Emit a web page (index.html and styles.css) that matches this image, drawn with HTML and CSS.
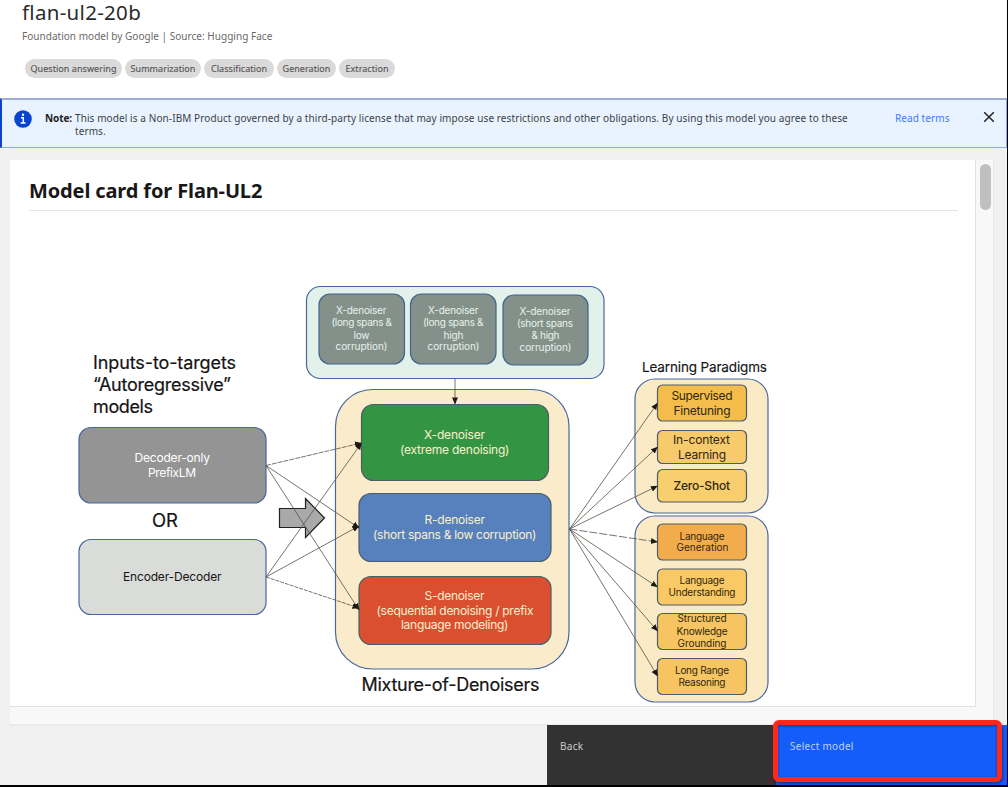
FILE: index.html
```html
<!DOCTYPE html>
<html lang="en">
<head>
<meta charset="utf-8">
<title>flan-ul2-20b</title>
<link rel="stylesheet" href="styles.css">
</head>
<body>
<div class="dialog">
  <header class="head">
    <h1 class="title">flan-ul2-20b</h1>
    <p class="subtitle">Foundation model by Google | Source: Hugging Face</p>
    <div class="tags">
      <span class="tag t1">Question answering</span>
      <span class="tag t2">Summarization</span>
      <span class="tag t3">Classification</span>
      <span class="tag t4">Generation</span>
      <span class="tag t5">Extraction</span>
    </div>
  </header>
  <section class="notice">
    <svg class="info" viewBox="0 0 18 18" width="18" height="18"><circle cx="9" cy="9" r="8.8" fill="#0a43ce"/><circle cx="9" cy="4.8" r="1.2" fill="#fff"/><path d="M7 7.7h2.3v5M6.600 13h5" fill="none" stroke="#fff" stroke-width="1.5"/></svg>
    <strong class="note-label">Note:</strong>
    <p class="note-text">This model is a Non-IBM Product governed by a third-party license that may impose use restrictions and other obligations. By using this model you agree to these<br>terms.</p>
    <a class="read">Read terms</a>
    <svg class="close" viewBox="0 0 12 12" width="12" height="12"><path d="M1.200 1.200l9.600 9.600M10.800 1.200l-9.600 9.600" stroke="#222" stroke-width="1.5"/></svg>
  </section>
  <main class="panel">
    <article class="card">
      <h2 class="card-title">Model card for Flan-UL2</h2>
      <svg class="diagram" viewBox="10 211 965 495" width="965" height="495">
        <defs>
          <marker id="arrow" viewBox="0 0 8 8" refX="7.5" refY="4" markerWidth="7" markerHeight="7" markerUnits="userSpaceOnUse" orient="auto"><path d="M0 .6L8 4L0 7.4z" fill="#1c1a10"/></marker>
        </defs>
        <g stroke="#48679f" stroke-width="1.2">
          <rect x="306.500" y="286.500" width="297.500" height="92" rx="14" fill="#e2f1ea"/>
          <g fill="#83918a" stroke="#41658b">
            <rect x="319" y="294" width="85.500" height="70" rx="11"/>
            <rect x="410.500" y="294" width="85.500" height="70" rx="11"/>
            <rect x="503" y="295" width="85" height="70" rx="11"/>
          </g>
          <rect x="335.500" y="389.500" width="233.500" height="279.500" rx="37" fill="#faeccb"/>
          <rect x="79" y="427.500" width="187" height="75.500" rx="12" fill="#949494"/>
          <rect x="79" y="539.500" width="187" height="75" rx="12" fill="#dadcd9"/>
          <rect x="635" y="379" width="133" height="134" rx="20" fill="#faebc6"/>
          <rect x="635" y="516" width="133" height="186" rx="20" fill="#faebc6"/>
        </g>
        <g stroke="#4c5d68" stroke-width="1.2">
          <rect x="361.500" y="404.500" width="187" height="76" rx="12" fill="#339544"/>
          <rect x="359" y="493.500" width="192" height="68" rx="12" fill="#5681bc"/>
          <rect x="359" y="576.500" width="192" height="68" rx="12" fill="#da4f30"/>
          <rect x="657.500" y="385" width="89" height="36" rx="5" fill="#f4bd4b"/>
          <rect x="657.500" y="430.500" width="89" height="33" rx="5" fill="#f7ca6c"/>
          <rect x="657.500" y="469.500" width="89" height="32.500" rx="5" fill="#f8ce6e"/>
          <rect x="657.500" y="524" width="89" height="36" rx="5" fill="#f3ac4c"/>
          <rect x="657.500" y="569" width="89" height="36" rx="5" fill="#f8c964"/>
          <rect x="657.500" y="613.500" width="89" height="36" rx="5" fill="#f6c460"/>
          <rect x="657.500" y="658.500" width="89" height="36" rx="5" fill="#f6c460"/>
        </g>
        <path d="M279.500 508.500H305.500V498.500L324.500 518L305.500 537.500V527.500H279.500z" fill="#a9a9a9" stroke="#222" stroke-width="1.2"/>
        <g stroke="#555044" stroke-width=".8" fill="none">
          <path d="M455 379V404" marker-end="url(#arrow)"/>
          <path d="M266 465.500L361.500 443" stroke-dasharray="5 1" marker-end="url(#arrow)"/>
          <path d="M266 465.500L359 528" marker-end="url(#arrow)"/>
          <path d="M266 465.500L359 610" marker-end="url(#arrow)"/>
          <path d="M266 577L361.500 443" marker-end="url(#arrow)"/>
          <path d="M266 577L359 526" marker-end="url(#arrow)"/>
          <path d="M266 577L359 608" stroke-dasharray="4 1" marker-end="url(#arrow)"/>
          <path d="M569.500 529L657.500 403" marker-end="url(#arrow)"/>
          <path d="M569.500 529L657.500 447" marker-end="url(#arrow)"/>
          <path d="M569.500 529L657.500 486" marker-end="url(#arrow)"/>
          <path d="M569.500 529L657.500 542" stroke-dasharray="8 2" marker-end="url(#arrow)"/>
          <path d="M569.500 529L657.500 587" marker-end="url(#arrow)"/>
          <path d="M569.500 529L657.500 631" marker-end="url(#arrow)"/>
          <path d="M569.500 529L657.500 676" marker-end="url(#arrow)"/>
        </g>
        <g class="label large">
          <text x="93" y="369" textLength="143">Inputs-to-targets</text>
          <text x="93" y="390.500" textLength="138">“Autoregressive”</text>
          <text x="93" y="412.500" textLength="60">models</text>
          <text x="152" y="527" textLength="26" lengthAdjust="spacingAndGlyphs">OR</text>
          <text x="361.500" y="690.500" textLength="178">Mixture-of-Denoisers</text>
        </g>
        <text class="label paradigm" x="642" y="372" textLength="125">Learning Paradigms</text>
        <g class="label mid">
          <text class="white" x="134.500" y="462" textLength="75.500">Decoder-only</text>
          <text class="white" x="148" y="477" textLength="48">PrefixLM</text>
          <text x="123" y="581" textLength="98.500">Encoder-Decoder</text>
        </g>
        <g class="label mid cream">
          <text x="424" y="439" textLength="61">X-denoiser</text>
          <text x="400" y="454" textLength="109.500">(extreme denoising)</text>
          <text x="424.500" y="524" textLength="60.500">R-denoiser</text>
          <text x="373" y="539" textLength="163.500">(short spans &amp; low corruption)</text>
          <text x="424.500" y="600" textLength="60">S-denoiser</text>
          <text x="376.500" y="615" textLength="157">(sequential denoising / prefix</text>
          <text x="401" y="629" textLength="107.500">language modeling)</text>
        </g>
        <g class="label small pale">
          <text x="336" y="314" textLength="50.500">X-denoiser</text>
          <text x="331.500" y="326" textLength="60.500">(long spans &amp;</text>
          <text x="353.500" y="338.500" textLength="16">low</text>
          <text x="335.500" y="350" textLength="52">corruption)</text>
          <text x="428" y="314" textLength="50.500">X-denoiser</text>
          <text x="423" y="326" textLength="60.500">(long spans &amp;</text>
          <text x="443.500" y="338.500" textLength="20">high</text>
          <text x="427.500" y="350" textLength="52">corruption)</text>
          <text x="519.500" y="315" textLength="51">X-denoiser</text>
          <text x="517" y="327" textLength="56">(short spans</text>
          <text x="531.500" y="339" textLength="28">&amp; high</text>
          <text x="519.500" y="351" textLength="52">corruption)</text>
        </g>
        <g class="label mid brown">
          <text x="671.500" y="400" textLength="61">Supervised</text>
          <text x="673.500" y="415" textLength="57">Finetuning</text>
          <text x="673" y="444" textLength="57">In-context</text>
          <text x="678" y="458.500" textLength="48">Learning</text>
          <text x="673.500" y="490" textLength="56.500" class="strong">Zero-Shot</text>
        </g>
        <g class="label small brown">
          <text x="679.500" y="539.500" textLength="45">Language</text>
          <text x="676.500" y="551" textLength="52">Generation</text>
          <text x="679.500" y="584" textLength="45">Language</text>
          <text x="668.500" y="596" textLength="67">Understanding</text>
          <text x="677.500" y="622" textLength="49">Structured</text>
          <text x="676.500" y="635" textLength="51">Knowledge</text>
          <text x="677.500" y="646.500" textLength="49">Grounding</text>
          <text x="675" y="674" textLength="54">Long Range</text>
          <text x="678.500" y="685.500" textLength="47">Reasoning</text>
        </g>
      </svg>
    </article>
    <div class="track"><div class="thumb"></div></div>
  </main>
  <footer class="actions">
    <button class="btn back">Back</button>
    <button class="btn select">Select model<span class="highlight"></span></button>
  </footer>
</div>
</body>
</html>
```
FILE: styles.css
```css
* { box-sizing: border-box; }
body { margin: 0; background: #000; font-family: "Noto Sans", sans-serif; overflow: hidden; }
h1, h2, p { margin: 0; }
.dialog { width: 1007px; height: 785px; background: #f1f1f1; display: flex; flex-direction: column; }
.head { height: 98px; background: #fff; padding-left: 22px; flex: none; }
.title { font-size: 20.500px; line-height: 24px; font-weight: 400; color: #2b2b2b; letter-spacing: .3px; white-space: nowrap; }
.subtitle { margin-top: 4px; font-size: 10px; line-height: 16px; color: #6a6a6a; letter-spacing: .03px; white-space: nowrap; }
.tags { display: flex; gap: 3px; margin: 15px 0 0 3px; }
.tag { height: 19px; border-radius: 10px; background: #dadada; color: #575757; font-size: 9px; line-height: 19px; text-align: center; white-space: nowrap; letter-spacing: .05px; -webkit-text-stroke: .15px #575757; }
.t1 { width: 97px; }
.t2 { width: 76px; }
.t3 { width: 70px; }
.t4 { width: 59px; }
.t5 { width: 56px; }
.notice { height: 50px; flex: none; display: flex; align-items: flex-start; background: #e9f3ff; border: 1px solid #8fabe3; border-left: 2px solid #0a43ce; border-top: 2px solid #9eafd6; padding-left: 12px; font-size: 10px; line-height: 13px; color: #3c3f45; white-space: nowrap; }
.info { margin-top: 10px; margin-right: 13px; flex: none; }
.note-label { width: 30px; margin-top: 12px; color: #222; letter-spacing: -.1px; }
.note-text { width: 820px; margin-top: 12px; letter-spacing: .093px; }
.read { color: #3c7bf5; margin-top: 12px; width: 88px; letter-spacing: .08px; }
.close { margin-top: 11px; flex: none; }
.panel { width: 984px; height: 566px; margin: 12px 0 0 10px; background: #f8f8f8; border-right: 1px solid #e9e9e9; border-bottom: 2px solid #ebebeb; display: flex; flex: none; }
.card { width: 966px; height: 547px; background: #fff; border-right: 1px solid #e2e2e2; border-bottom: 1px solid #e2e2e2; overflow: hidden; }
.card-title { margin: 0 17px 0 19px; height: 51px; border-bottom: 1px solid #e4e4e4; font-size: 20px; line-height: 28px; padding-top: 17px; color: #181818; letter-spacing: -.13px; white-space: nowrap; }
.diagram { display: block; }
.label { font-family: Inter, sans-serif; fill: #151515; }
.large { font-size: 18px; stroke: #151515; stroke-width: .2px; }
.paradigm { font-size: 13.500px; stroke: #151515; stroke-width: .15px; }
.mid { font-size: 12px; }
.small { font-size: 10px; }
.white { fill: #fff; }
.cream { fill: #fbf0cc; }
.pale { fill: #e8f1ec; }
.brown { fill: #302711; }
.strong { font-weight: 500; }
.track { padding: 4px 0 0 4px; }
.thumb { width: 11px; height: 46px; border-radius: 6px; background: #c0c0c0; }
.actions { flex: 1; display: flex; justify-content: flex-end; margin-top: -1px; }
.btn { border: 0; padding: 14px 13px; display: flex; align-items: flex-start; font: 10px/14px "Noto Sans", sans-serif; letter-spacing: .3px; color: #ccc; }
.back { width: 229px; background: #323232; }
.select { width: 231px; background: #155dfb; color: #bdd1ff; position: relative; padding-left: 14px; }
.highlight { position: absolute; left: -3px; top: -5px; width: 229px; height: 62px; border: 5px solid #ff281c; border-radius: 6px; box-shadow: 1px 2px 3px #0006, inset 0 1px 3px #0006; }
```
